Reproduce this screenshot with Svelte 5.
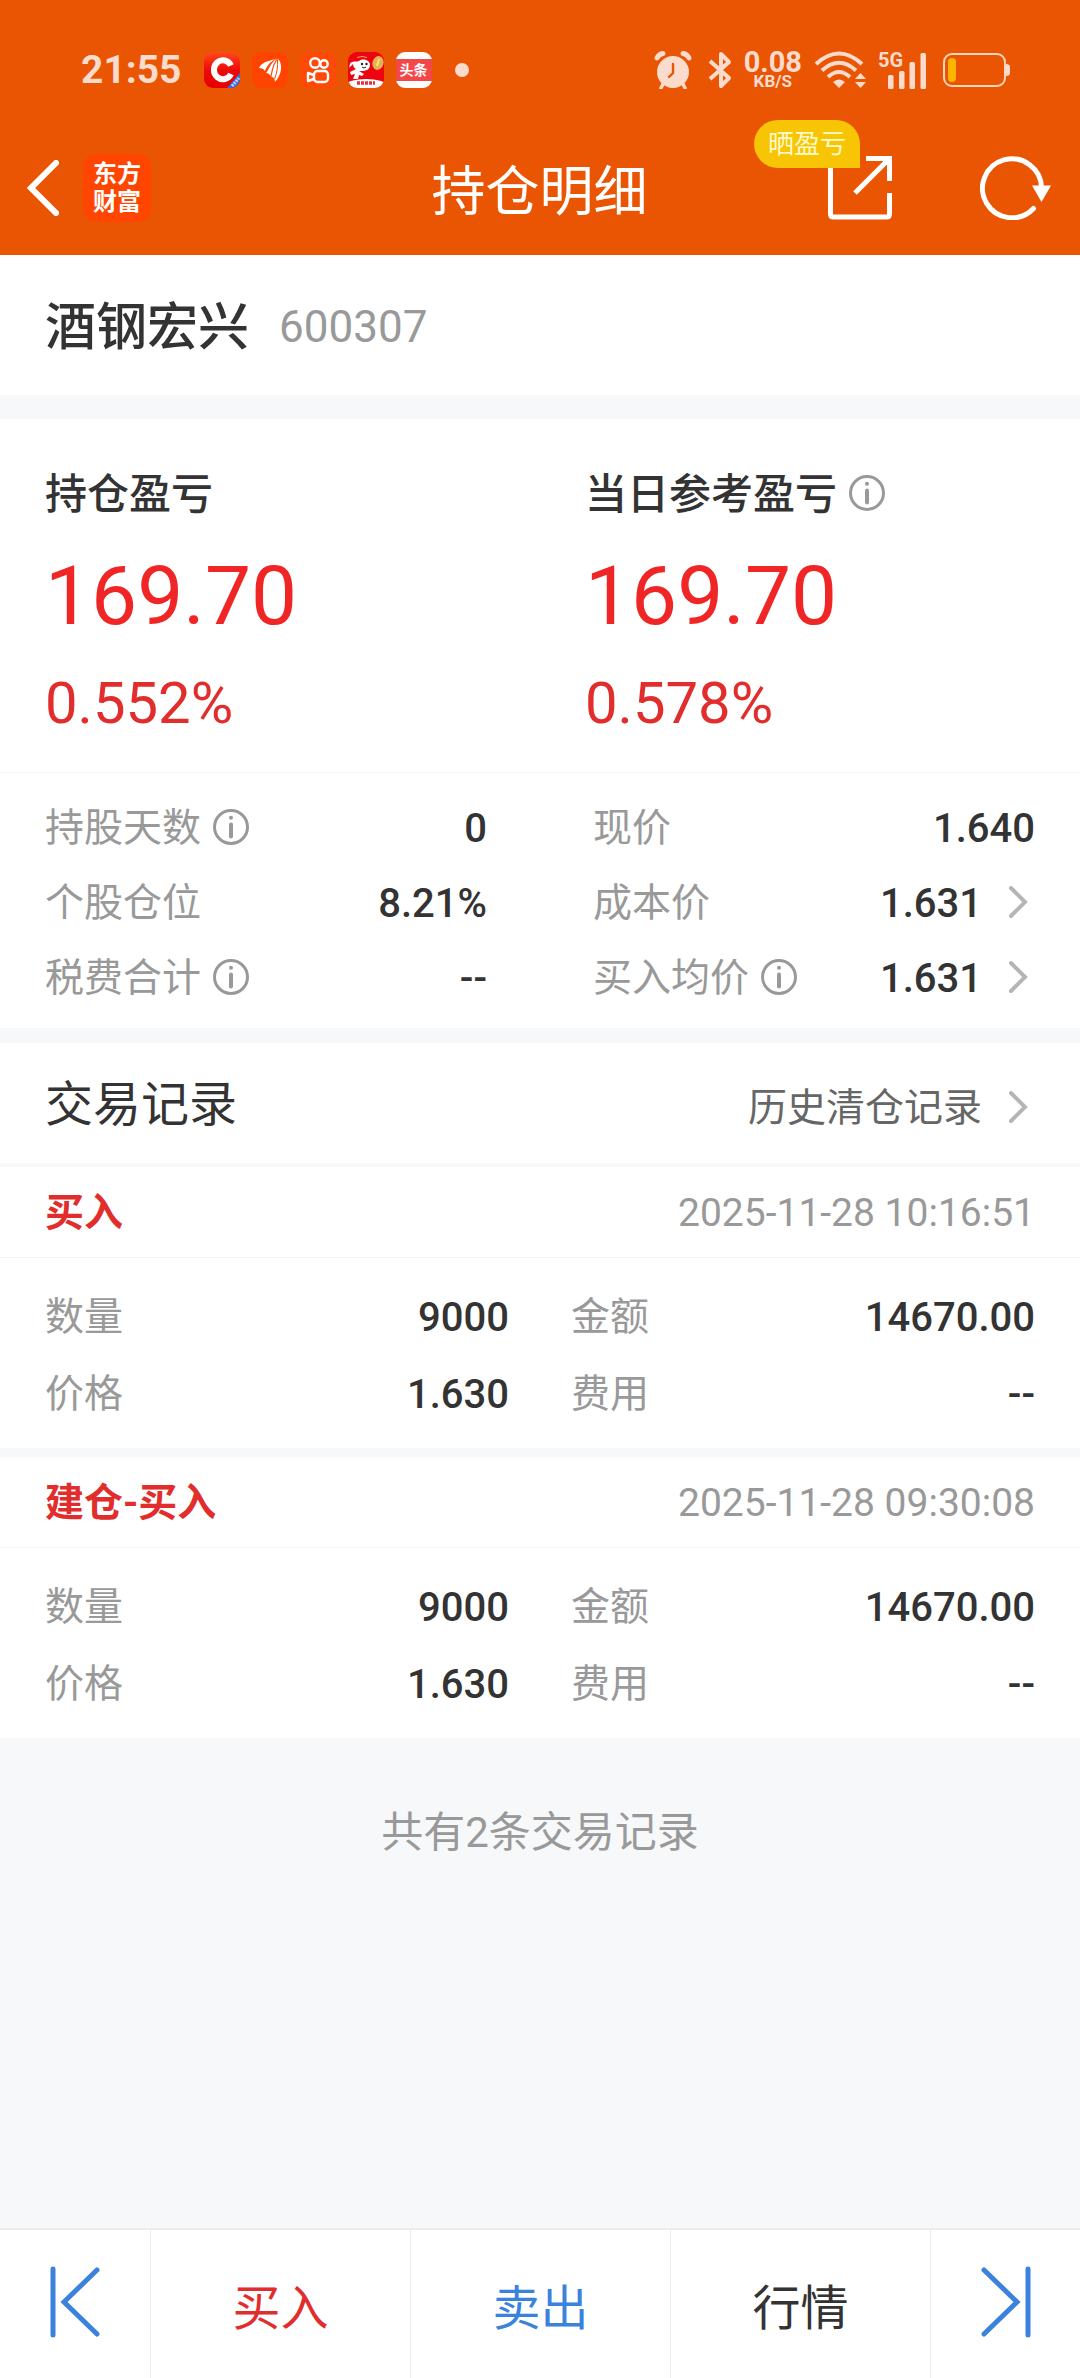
<script lang="ts">
	interface Stat {
		label: string;
		value: string;
		info?: boolean;
		link?: boolean;
	}

	interface TradeRecord {
		type: string;
		time: string;
		fields: { label: string; value: string }[];
	}

	const stock = { name: '酒钢宏兴', code: '600307' };

	const profits = [
		{ label: '持仓盈亏', amount: '169.70', percent: '0.552%', info: false },
		{ label: '当日参考盈亏', amount: '169.70', percent: '0.578%', info: true }
	];

	// Row by row, left column first.
	const stats: Stat[] = [
		{ label: '持股天数', value: '0', info: true },
		{ label: '现价', value: '1.640' },
		{ label: '个股仓位', value: '8.21%' },
		{ label: '成本价', value: '1.631', link: true },
		{ label: '税费合计', value: '--', info: true },
		{ label: '买入均价', value: '1.631', info: true, link: true }
	];

	const records: TradeRecord[] = [
		{
			type: '买入',
			time: '2025-11-28 10:16:51',
			fields: [
				{ label: '数量', value: '9000' },
				{ label: '金额', value: '14670.00' },
				{ label: '价格', value: '1.630' },
				{ label: '费用', value: '--' }
			]
		},
		{
			type: '建仓-买入',
			time: '2025-11-28 09:30:08',
			fields: [
				{ label: '数量', value: '9000' },
				{ label: '金额', value: '14670.00' },
				{ label: '价格', value: '1.630' },
				{ label: '费用', value: '--' }
			]
		}
	];
</script>

{#snippet infoButton(label: string)}
	<button class="info" aria-label="{label}说明">
		<svg viewBox="0 0 36 36" width="36" height="36">
			<circle cx="18" cy="18" r="16.5" fill="none" stroke="#999" stroke-width="3" />
			<circle cx="18" cy="8.7" r="2" fill="#999" />
			<path d="M18 15.5v12" stroke="#999" stroke-width="4" stroke-linecap="round" />
		</svg>
	</button>
{/snippet}

{#snippet chevron()}
	<svg class="chevron" viewBox="0 0 20 34" width="20" height="34">
		<path d="M3 3l14 14L3 31" fill="none" stroke="#b5b5b5" stroke-width="4" stroke-linecap="round" />
	</svg>
{/snippet}

<div class="page">
	<header>
		<div class="status">
			<span class="clock">21:55</span>
			<div class="apps">
				<svg viewBox="0 0 36 36" width="36" height="36">
					<defs>
						<linearGradient id="c-bg" x1="0" y1="0" x2="0" y2="1">
							<stop offset="0" stop-color="#ff4a1c" />
							<stop offset="0.5" stop-color="#ee0a0a" />
							<stop offset="1" stop-color="#e60000" />
						</linearGradient>
						<clipPath id="app-clip"><rect width="36" height="36" rx="9" /></clipPath>
					</defs>
					<g clip-path="url(#app-clip)">
						<rect width="36" height="36" fill="url(#c-bg)" />
						<path d="M36 21v15H23z" fill="#2f6fe0" />
						<path d="M28 34l7-8" stroke="#bcd2ff" stroke-width="3" stroke-dasharray="2 1" />
						<path d="M27 13.500A9 9.500 0 1 0 27 22" fill="none" stroke="#fff" stroke-width="6" />
					</g>
				</svg>
				<svg viewBox="0 0 36 36" width="36" height="36">
					<rect width="36" height="36" rx="9" fill="#ff4400" />
					<g fill="#fff">
						<path d="M7 16C11 9 18 11 24 6C18 10 15 13 13 19C11 16 9 15 7 16z" />
						<path d="M14 21C17 18 18 11 25 6.500C21 12 20 17 18.500 24C17.500 22 16 21 14 21z" />
						<path d="M19.500 25C21 18 22 12 26 7C31 12 30 22 23 30C23 27 21.500 25 19.500 25z" />
						<path d="M7 16C10 9 20 9 24 6.500C18 10 16 13 13.500 17z" />
					</g>
					<path d="M22.500 27C25 21 26 14 25.500 8" fill="none" stroke="#ff4400" />
				</svg>
				<svg viewBox="0 0 36 36" width="36" height="36">
					<rect width="36" height="36" rx="9" fill="#ff4906" />
					<g fill="none" stroke="#fff" stroke-width="2.4" stroke-linejoin="round">
						<circle cx="15" cy="11" r="4.8" />
						<circle cx="24" cy="12" r="3.7" />
						<rect x="14" y="19" width="14" height="11" rx="3.5" />
						<path d="M14 23l-6-2v8l6-2" />
					</g>
				</svg>
				<svg viewBox="0 0 36 36" width="36" height="36">
					<g clip-path="url(#app-clip)">
						<rect width="36" height="36" fill="#ee0410" />
						<ellipse cx="18" cy="33" rx="20" ry="6" fill="#fff" />
						<path d="M9 31h18" stroke="#e8303a" stroke-width="3.500" stroke-dasharray="3 1" />
						<path d="M1 16c1-2 0-5 3-6 3-1 5 0 7-1 4-3 10-1 11 3 0 5-3 7-8 7h-3l5 3-2 2-3-1-1 4h-5l2-5-4 1-1-3 6-3c-2-1-3-3-3-5z" fill="#fff" />
						<circle cx="14" cy="12" r="1.2" fill="#222" />
						<circle cx="18.500" cy="12" r="1.2" fill="#222" />
						<path d="M14 15q2 2 4 0" fill="none" stroke="#222" />
						<path d="M9 5.500q5-2 10 0" fill="none" stroke="#ddb060" />
						<ellipse cx="30" cy="11" rx="5.5" ry="7" fill="#e8b24a" transform="rotate(15 30 11)" />
						<path d="M31 7l-2 7" stroke="#fae09a" stroke-width="2" />
					</g>
				</svg>
				<span class="toutiao"><b>头条</b></span>
				<i class="more"></i>
			</div>
			<div class="system">
				<svg viewBox="0 0 38 38" width="38" height="38">
					<g stroke="#fbdccc" stroke-width="3.5" stroke-linecap="round" fill="none">
						<path d="M9 33l-2 4M29 33l2 4" />
						<path d="M3 7q2-4 6-4.500M35 7q-2-4-6-4.500" stroke-width="5" />
					</g>
					<circle cx="19" cy="21" r="16" fill="#fbdccc" />
					<path d="M19 13v9l-4 4" fill="none" stroke="#ea5504" stroke-width="2.4" stroke-linecap="round" />
				</svg>
				<svg class="bluetooth" viewBox="0 0 24 38" width="24" height="38">
					<path d="M2 10l19 17-8 8V3l8 8L2 28" fill="none" stroke="#fbdccc" stroke-width="4" stroke-linejoin="round" />
				</svg>
				<div class="speed"><b>0.08</b><small>KB/S</small></div>
				<svg viewBox="0 0 52 38" width="52" height="38">
					<g fill="none" stroke="#fbdccc" stroke-width="4">
						<path d="M2 13Q25-8 48 13" />
						<path d="M8 19.500Q25 4 42 19.500" />
						<path d="M14 26Q25 16 36 26" />
					</g>
					<path d="M25 37l-6-6q6-5 12 0z" fill="#fbdccc" />
					<path d="M41 28h11l-5.500-6zM41 31h11l-5.500 6z" fill="#fbdccc" />
				</svg>
				<div class="signal">
					<span>5G</span>
					<svg viewBox="0 0 39 37" width="39" height="37">
						<g fill="#fbdccc">
							<rect x="0" y="23" width="5.500" height="14" rx="1.500" />
							<rect x="11" y="19" width="5.500" height="18" rx="1.500" />
							<rect x="21.500" y="10" width="5.500" height="27" rx="1.500" />
							<rect x="32.500" y="1" width="5.500" height="36" rx="1.500" />
						</g>
					</svg>
				</div>
				<svg viewBox="0 0 68 36" width="68" height="36">
					<rect x="1" y="2" width="61" height="32" rx="8" fill="none" stroke="#fbd5bc" stroke-width="2" />
					<rect x="5" y="6" width="8" height="24" rx="4" fill="#ffb400" />
					<path d="M63 12q4 0 4 3v6q0 3-4 3z" fill="#fbdccc" />
				</svg>
			</div>
		</div>

		<nav class="topbar">
			<div class="left">
				<button aria-label="返回">
					<svg viewBox="0 0 32 56" width="32" height="56">
						<path d="M29 3L4 28l25 25" fill="none" stroke="#fff" stroke-width="6" stroke-linecap="square" />
					</svg>
				</button>
				<span class="logo">东方<br />财富</span>
			</div>
			<h1>持仓明细</h1>
			<div class="right">
				<button class="share" aria-label="分享">
					<svg viewBox="0 0 64 64" width="64" height="64">
						<g fill="none" stroke="#fff" stroke-width="5">
							<path d="M2.500 6v52q0 3 3 3h53q3 0 3-3V37" />
							<path d="M38 2.500h23.500V25M61 3L27 37" />
						</g>
					</svg>
					<span class="tip">晒盈亏</span>
				</button>
				<button aria-label="刷新">
					<svg viewBox="0 0 72 64" width="72" height="64">
						<path d="M53.500 52.500A29.500 29.500 0 1 1 61.500 32" fill="none" stroke="#fff" stroke-width="5" stroke-linecap="round" />
						<path d="M52 29.500h19L61.500 46z" fill="#fff" />
					</svg>
				</button>
			</div>
		</nav>
	</header>

	<main>
		<section class="stock">
			<h2>{stock.name}</h2>
			<span>{stock.code}</span>
		</section>

		<section class="summary">
			<div class="profits">
				{#each profits as p}
					<div class="profit">
						<h3>{p.label}{#if p.info}{@render infoButton(p.label)}{/if}</h3>
						<p class="amount">{p.amount}</p>
						<p class="percent">{p.percent}</p>
					</div>
				{/each}
			</div>
			<dl class="stats">
				{#each stats as s}
					<div class="pair">
						<dt>{s.label}{#if s.info}{@render infoButton(s.label)}{/if}</dt>
						<dd>
							{#if s.link}
								<a href="#detail">{s.value}{@render chevron()}</a>
							{:else}
								{s.value}
							{/if}
						</dd>
					</div>
				{/each}
			</dl>
		</section>

		<section class="trades">
			<div class="trades-head">
				<h2>交易记录</h2>
				<a href="#history">历史清仓记录{@render chevron()}</a>
			</div>
			{#each records as r}
				<article>
					<div class="record-head">
						<h3>{r.type}</h3>
						<time>{r.time}</time>
					</div>
					<dl class="fields">
						{#each r.fields as f}
							<div class="pair">
								<dt>{f.label}</dt>
								<dd>{f.value}</dd>
							</div>
						{/each}
					</dl>
				</article>
			{/each}
		</section>

		<p class="total">共有{records.length}条交易记录</p>
	</main>

	<footer>
		<button aria-label="上一只">
			<svg viewBox="0 0 52 72" width="52" height="72">
				<path d="M4 3v66M48 4L15 36l33 32" fill="none" stroke="#3b82dc" stroke-width="5" stroke-linecap="round" />
			</svg>
		</button>
		<button class="buy">买入</button>
		<button class="sell">卖出</button>
		<button>行情</button>
		<button aria-label="下一只">
			<svg viewBox="0 0 52 72" width="52" height="72">
				<path d="M48 3v66M4 4l33 32L4 68" fill="none" stroke="#3b82dc" stroke-width="5" stroke-linecap="round" />
			</svg>
		</button>
	</footer>
</div>

<style>
	:global(body) {
		margin: 0;
	}

	.page {
		display: flex;
		flex-direction: column;
		min-height: 100vh;
		background: #f7f8fa;
		color: #333;
		font-family: Roboto, 'Noto Sans CJK SC', sans-serif;
		font-size: 39px;
		line-height: 1;
	}

	h1,
	h2,
	h3,
	p,
	dl,
	dd {
		margin: 0;
		font-weight: 400;
	}

	h1,
	footer {
		font-family: 'Noto Sans CJK SC', sans-serif;
	}

	button {
		display: inline-flex;
		align-items: center;
		justify-content: center;
		padding: 0;
		border: 0;
		background: none;
		color: inherit;
		font: inherit;
		cursor: pointer;
	}

	a {
		display: flex;
		align-items: center;
		gap: 26px;
		padding-right: 7px;
		color: inherit;
		text-decoration: none;
	}

	svg {
		display: block;
		flex: none;
	}

	/* these sit slightly above the middle of their text */
	.info,
	.chevron,
	footer svg {
		margin-bottom: 4px;
	}

	header {
		background: #ea5504;
		color: #fff;
	}

	/* system status bar */
	.status {
		display: flex;
		align-items: center;
		height: 40px;
		padding: 50px 69px 31px 81px;
		color: #fbdccc;
	}

	.clock {
		font-size: 39px;
		font-weight: 700;
	}

	.apps {
		display: flex;
		align-items: center;
		gap: 12px;
		margin-left: 22px;
	}

	.toutiao {
		display: flex;
		align-items: center;
		width: 36px;
		height: 36px;
		border-radius: 9px;
		background: #fff;
	}

	.toutiao b {
		width: 36px;
		background: #f34848;
		color: #fff;
		font-size: 14px;
		line-height: 22px;
		text-align: center;
	}

	.more {
		width: 14px;
		height: 14px;
		margin-left: 11px;
		border-radius: 50%;
		background: #fbdccc;
	}

	.system {
		display: flex;
		align-items: center;
		gap: 12px;
		margin-left: auto;
	}

	.bluetooth {
		margin-left: 4px;
	}

	.speed {
		display: flex;
		flex-direction: column;
		align-items: center;
	}

	.speed b {
		font-size: 29px;
		line-height: 22px;
	}

	.speed small {
		font-size: 17px;
		font-weight: 700;
		line-height: 16px;
	}

	.signal {
		position: relative;
		padding-left: 10px;
		margin-right: 4px;
	}

	.signal span {
		position: absolute;
		top: 0;
		left: 0;
		font-size: 20px;
		font-weight: 700;
		line-height: 16px;
	}

	/* title bar */
	.topbar {
		display: grid;
		grid-template-columns: 1fr auto 1fr;
		align-items: center;
		height: 134px;
		padding: 0 28px 0 27px;
	}

	.topbar h1 {
		font-size: 54px;
	}

	.left,
	.right {
		display: flex;
		align-items: center;
		gap: 24px;
	}

	.right {
		justify-content: flex-end;
		gap: 88px;
	}

	.logo {
		box-sizing: border-box;
		width: 68px;
		padding: 6px 0;
		border-radius: 14px;
		background: #ff4500;
		font-size: 24px;
		font-weight: 700;
		line-height: 28px;
		text-align: center;
	}

	.share {
		position: relative;
	}

	.tip {
		position: absolute;
		right: 32px;
		bottom: 52px;
		padding: 0 14px;
		border-radius: 24px 24px 0 24px;
		background: #f8c406;
		color: #fffbc8;
		font-size: 26px;
		line-height: 48px;
		white-space: nowrap;
	}

	/* stock name */
	.stock {
		box-sizing: border-box;
		display: flex;
		align-items: center;
		gap: 30px;
		height: 140px;
		padding: 4px 45px 0;
		margin-bottom: 24px;
		background: #fff;
	}

	.stock h2 {
		font-size: 51px;
		font-weight: 500;
	}

	.stock span {
		color: #999;
		font-size: 44px;
	}

	/* profit and position summary */
	.summary {
		margin-bottom: 15px;
		background: #fff;
	}

	.profits {
		display: grid;
		grid-template-columns: 1fr 1fr;
		padding: 54px 0 39px;
		border-bottom: 1px solid #f3f4f6;
	}

	.profit {
		padding-left: 45px;
	}

	.profit h3 {
		display: flex;
		align-items: center;
		gap: 12px;
		font-size: 42px;
		font-weight: 500;
		line-height: 44px;
	}

	.amount {
		margin-top: 34px;
		color: #f02626;
		font-size: 82px;
		line-height: 90px;
	}

	.percent {
		margin-top: 32px;
		color: #e22d2d;
		font-size: 58px;
		line-height: 60px;
	}

	.stats {
		display: grid;
		grid-template-columns: 1fr 1fr;
		column-gap: 106px;
		padding: 18px 45px 12px;
	}

	.pair {
		display: flex;
		align-items: center;
		justify-content: space-between;
		height: 75px;
	}

	.pair dt {
		display: flex;
		align-items: center;
		gap: 12px;
		color: #999;
	}

	.pair dd {
		font-size: 40px;
		font-weight: 500;
	}

	/* trade records */
	.trades-head {
		display: flex;
		align-items: baseline;
		justify-content: space-between;
		height: 117px;
		padding: 3px 45px 0;
		border-bottom: 4px solid #f7f8fa;
		background: #fff;
	}

	.trades-head h2 {
		font-size: 48px;
		line-height: 117px;
	}

	.trades-head a {
		color: #666;
	}

	article {
		background: #fff;
	}

	article + article {
		margin-top: 9px;
	}

	.record-head {
		display: flex;
		align-items: center;
		justify-content: space-between;
		height: 88px;
		padding: 2px 45px 0;
		border-bottom: 1px solid #f3f4f6;
	}

	.record-head h3 {
		color: #e22d2d;
		font-size: 39px;
		font-weight: 700;
	}

	.record-head time {
		color: #999;
	}

	.fields {
		display: grid;
		grid-template-columns: 1fr 1fr;
		column-gap: 62px;
		padding: 21px 45px 15px;
	}

	.fields .pair {
		height: 77px;
	}

	.total {
		padding: 74px 0;
		color: #999;
		font-size: 42px;
		text-align: center;
	}

	/* bottom actions */
	footer {
		position: sticky;
		bottom: 0;
		display: grid;
		grid-template-columns: 150px 1fr 1fr 1fr 150px;
		height: 148px;
		margin-top: auto;
		border-top: 2px solid #ececec;
		background: #fff;
		font-size: 48px;
	}

	footer button + button {
		border-left: 1px solid #ececec;
	}

	.buy {
		color: #e22d2d;
	}

	.sell {
		color: #3b82dc;
	}
</style>
